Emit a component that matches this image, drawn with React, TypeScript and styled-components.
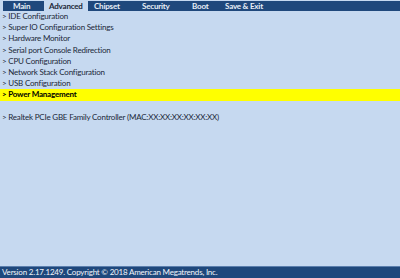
import React from 'react';
import styled, { createGlobalStyle } from 'styled-components';

const GlobalStyle = createGlobalStyle`
  html, body {
    margin: 0;
    padding: 0;
    background: #c6d9f0;
  }
  #root {
    height: 100vh;
  }
`;

const Screen = styled.div`
  width: 400px;
  height: 278px;
  display: flex;
  flex-direction: column;
  background: #c6d9f0;
  font-family: Lato, 'Liberation Sans', sans-serif;
  color: #1b2838;
  overflow: hidden;
`;

const TabBar = styled.div`
  height: 10px;
  margin-top: 1px;
  padding-left: 3px;
  display: flex;
  align-items: stretch;
`;

const Tab = styled.div<{ $active?: boolean; $w: number; $pl: number }>`
  width: ${(p) => p.$w}px;
  padding-left: ${(p) => p.$pl}px;
  box-sizing: border-box;
  display: flex;
  align-items: center;
  font-size: 8px;
  font-weight: 700;
  letter-spacing: -0.2px;
  line-height: 10px;
  white-space: nowrap;
  background: ${(p) => (p.$active ? '#c6d9f0' : '#1f487c')};
  color: ${(p) => (p.$active ? '#1b2838' : '#e8eef7')};
`;

const TabFill = styled.div`
  flex: 1;
  background: #1f487c;
`;

const Menu = styled.div`
  flex: 1;
  display: flex;
  flex-direction: column;
`;

const Row = styled.div<{ $selected?: boolean }>`
  height: 11.2px;
  line-height: 11.2px;
  padding-left: 2px;
  font-size: 8px;
  letter-spacing: -0.2px;
  white-space: nowrap;
  background: ${(p) => (p.$selected ? '#ffff00' : 'transparent')};
  font-weight: ${(p) => (p.$selected ? 700 : 400)};
  color: ${(p) => (p.$selected ? '#000' : '#1b2838')};
`;

const Footer = styled.div`
  height: 11px;
  border-top: 1px solid #5b7fae;
  background: #1f487c;
  color: #f2f5fa;
  font-size: 8px;
  letter-spacing: -0.2px;
  line-height: 11px;
  padding-left: 2px;
  white-space: nowrap;
`;

const tabs = [
  { label: 'Main', w: 41, pl: 10 },
  { label: 'Advanced', w: 44, pl: 5, active: true },
  { label: 'Chipset', w: 48, pl: 6 },
  { label: 'Security', w: 50, pl: 6 },
  { label: 'Boot', w: 33, pl: 6 },
  { label: 'Save & Exit', w: 60, pl: 6 },
];

const items = [
  '> IDE Configuration',
  '> Super IO Configuration Settings',
  '> Hardware Monitor',
  '> Serial port Console Redirection',
  '> CPU Configuration',
  '> Network Stack Configuration',
  '> USB Configuration',
  '> Power Management',
  '',
  '> Realtek PCIe GBE Family Controller (MAC:XX:XX:XX:XX:XX:XX)',
];

export default function App() {
  return (
    <>
      <GlobalStyle />
      <Screen>
        <TabBar>
          {tabs.map((t) => (
            <Tab key={t.label} $w={t.w} $pl={t.pl} $active={t.active}>
              {t.label}
            </Tab>
          ))}
          <TabFill />
        </TabBar>
        <Menu>
          {items.map((item, i) => (
            <Row key={i} $selected={item === '> Power Management'}>
              {item}
            </Row>
          ))}
        </Menu>
        <Footer>Version 2.17.1249. Copyright © 2018 American Megatrends, Inc.</Footer>
      </Screen>
    </>
  );
}
